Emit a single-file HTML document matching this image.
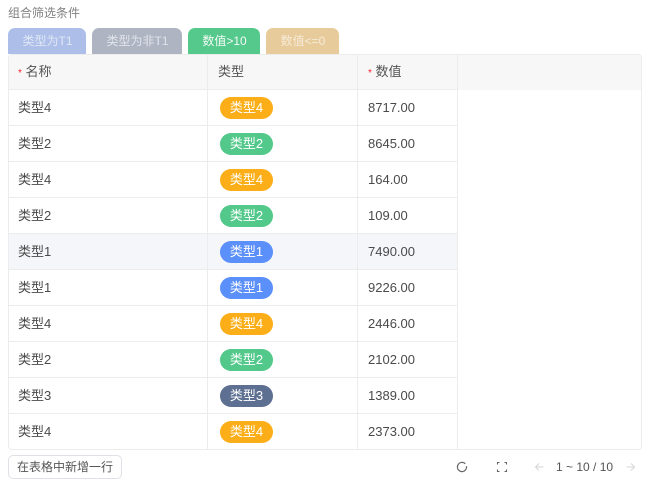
<!DOCTYPE html>
<html><head><meta charset="utf-8">
<style>
html,body{margin:0;padding:0;background:#fff}
body{width:650px;height:490px;position:relative;overflow:hidden;font-family:"Liberation Sans","Noto Sans CJK SC",sans-serif;color:#4a4a4a;font-size:13px}
.a{position:absolute;white-space:nowrap}
.tab{position:absolute;top:28px;height:26px;line-height:26px;border-radius:7px 7px 0 0;text-align:center;font-size:12px;padding-left:1px;box-sizing:border-box}
.hl{position:absolute;left:8px;width:450px;height:1px;background:#ececec}
.vl{position:absolute;width:1px;background:#ececec;top:54px;height:396px}
.c{position:absolute;line-height:20px;white-space:nowrap}
.p{position:absolute;left:220px;width:53px;height:22px;line-height:22px;border-radius:11px;color:#fff;text-align:center}
.y{background:#fbae17}.g{background:#53c88b}.b{background:#5b8ff9}.d{background:#5d7092}
.s{color:#f5222d;font-size:10px}
</style></head><body>
<div class="a" style="left:8px;top:5px;line-height:16px;font-size:12px;color:#808080">组合筛选条件</div>
<div class="tab" style="left:8px;width:78px;background:#adbfe8;color:#dfe6f6">类型为T1</div>
<div class="tab" style="left:92px;width:90px;background:#aeb4c2;color:#e2e4ea">类型为非T1</div>
<div class="tab" style="left:188px;width:72px;background:#55c98c;color:#f4fbf7">数值&gt;10</div>
<div class="tab" style="left:266px;width:73px;background:#e8cb9b;color:#f6ebd8">数值&lt;=0</div>

<div class="a" style="left:8px;top:54px;width:632px;height:394px;border:1px solid #ececec;border-radius:4px"></div>
<div class="a" style="left:9px;top:55px;width:632px;height:35px;background:#f7f7f7;border-radius:4px 4px 0 0"></div>
<div class="a" style="left:9px;top:234px;width:448px;height:35px;background:#f5f6fa"></div>

<div class="hl" style="top:89px"></div><div class="hl" style="top:125px"></div><div class="hl" style="top:161px"></div><div class="hl" style="top:197px"></div><div class="hl" style="top:233px"></div><div class="hl" style="top:269px"></div><div class="hl" style="top:305px"></div><div class="hl" style="top:341px"></div><div class="hl" style="top:377px"></div><div class="hl" style="top:413px"></div>
<div class="vl" style="left:207px"></div><div class="vl" style="left:357px"></div><div class="vl" style="left:457px"></div>

<div class="c" style="left:18px;top:62px;color:#555"><span class="s">*</span> 名称</div>
<div class="c" style="left:218px;top:62px;color:#555">类型</div>
<div class="c" style="left:368px;top:62px;color:#555"><span class="s">*</span> 数值</div>

<div class="c" style="left:18px;top:98px">类型4</div><div class="p y" style="top:97px">类型4</div><div class="c" style="left:368px;top:98px">8717.00</div>
<div class="c" style="left:18px;top:134px">类型2</div><div class="p g" style="top:133px">类型2</div><div class="c" style="left:368px;top:134px">8645.00</div>
<div class="c" style="left:18px;top:170px">类型4</div><div class="p y" style="top:169px">类型4</div><div class="c" style="left:368px;top:170px">164.00</div>
<div class="c" style="left:18px;top:206px">类型2</div><div class="p g" style="top:205px">类型2</div><div class="c" style="left:368px;top:206px">109.00</div>
<div class="c" style="left:18px;top:242px">类型1</div><div class="p b" style="top:241px">类型1</div><div class="c" style="left:368px;top:242px">7490.00</div>
<div class="c" style="left:18px;top:278px">类型1</div><div class="p b" style="top:277px">类型1</div><div class="c" style="left:368px;top:278px">9226.00</div>
<div class="c" style="left:18px;top:314px">类型4</div><div class="p y" style="top:313px">类型4</div><div class="c" style="left:368px;top:314px">2446.00</div>
<div class="c" style="left:18px;top:350px">类型2</div><div class="p g" style="top:349px">类型2</div><div class="c" style="left:368px;top:350px">2102.00</div>
<div class="c" style="left:18px;top:386px">类型3</div><div class="p d" style="top:385px">类型3</div><div class="c" style="left:368px;top:386px">1389.00</div>
<div class="c" style="left:18px;top:422px">类型4</div><div class="p y" style="top:421px">类型4</div><div class="c" style="left:368px;top:422px">2373.00</div>

<div class="a" style="left:8px;top:455px;width:112px;height:22px;line-height:22px;border:1px solid #e0e0e6;border-radius:5px;text-align:center;font-size:12px;color:#555">在表格中新增一行</div>

<svg class="a" style="left:456px;top:461px" width="12" height="12" viewBox="0 0 12 12" fill="none" stroke="#666" stroke-width="1.2"><circle cx="6" cy="6" r="4.6" stroke-dasharray="26 3" transform="rotate(-10 6 6)"/></svg>
<svg class="a" style="left:496px;top:461px" width="12" height="12" viewBox="0 0 12 12" fill="none" stroke="#666" stroke-width="1.1"><path d="M1.5 3.5V1.5H3.5M8.5 1.5H10.5V3.5M10.5 8.5V10.5H8.5M3.5 10.5H1.5V8.5"/></svg>
<svg class="a" style="left:534px;top:461px" width="12" height="12" viewBox="0 0 12 12" fill="none" stroke="#d6d6d6" stroke-width="1"><path d="M9.5 6H1.5M5 2.5L1.5 6L5 9.5"/></svg>
<div class="a" style="left:556px;top:459px;line-height:16px;font-size:12px;color:#555">1 ~ 10 / 10</div>
<svg class="a" style="left:624px;top:461px" width="12" height="12" viewBox="0 0 12 12" fill="none" stroke="#d6d6d6" stroke-width="1"><path d="M2.5 6H10.5M7 2.5L10.5 6L7 9.5"/></svg>
</body></html>
